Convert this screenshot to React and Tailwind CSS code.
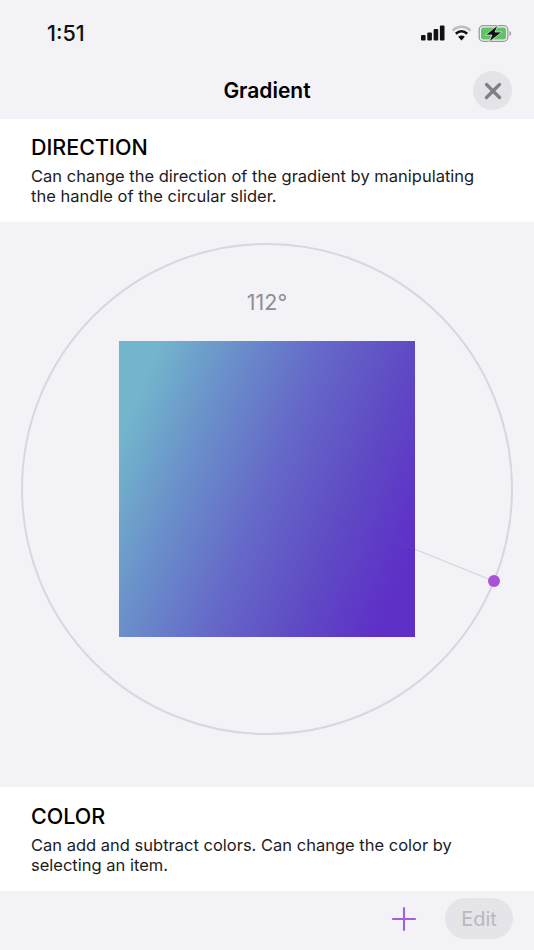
import { X, Plus } from 'lucide-react'

function StatusIcons() {
  return (
    <div className="flex items-center gap-[6px]">
      <svg width="24" height="16" viewBox="0 0 24 16">
        <rect x="0" y="10" width="4.6" height="5.5" rx="1" fill="#111" />
        <rect x="6.3" y="7.5" width="4.6" height="8" rx="1" fill="#111" />
        <rect x="12.6" y="4" width="4.6" height="11.5" rx="1" fill="#111" />
        <rect x="18.9" y="0.5" width="4.6" height="15" rx="1" fill="#111" />
      </svg>
      <svg width="21" height="16" viewBox="0 0 20 15" fill="none">
        <path d="M1.5 5.2C6.5 .3 13.5 .3 18.5 5.2" stroke="#bdbdc0" strokeWidth="2.4" />
        <path d="M4.6 8.2C7.8 5.2 12.2 5.2 15.4 8.2" stroke="#111" strokeWidth="2.4" />
        <path d="M10 14.6L6.8 11C8.6 9.5 11.4 9.5 13.2 11Z" fill="#111" />
      </svg>
      <svg width="34" height="17" viewBox="0 0 33 17" fill="none">
        <rect x="0.7" y="0.7" width="28.6" height="15.6" rx="4" stroke="#9a9a9d" strokeWidth="1.3" />
        <rect x="2.5" y="2.5" width="25" height="12" rx="2.2" fill="#5fc466" />
        <path d="M31 6V11C32.2 10.6 32.6 9.6 32.6 8.5S32.2 6.4 31 6Z" fill="#9a9a9d" />
        <path d="M19.5 0L7 10H13.5L10.5 17L23.5 7H16.5Z" fill="#111" stroke="#e4f4e4" strokeWidth="0.7" />
      </svg>
    </div>
  )
}

function InfoBlock({ title, className, children }) {
  return (
    <section className={`bg-white px-[31px] ${className}`}>
      <h2 className="text-[21.5px] leading-[27px] font-medium text-black">{title}</h2>
      <p className="mt-[5px] w-[460px] text-[16.5px] leading-[20px] text-[#1c1c1e]">{children}</p>
    </section>
  )
}

export default function App() {
  return (
    <div className="flex h-[950px] w-[534px] flex-col overflow-hidden bg-[#f2f2f7] font-['Inter','Liberation_Sans',sans-serif]">
      <div className="flex h-[59px] items-center justify-between pt-[7px] pr-[22px] pl-[47px]">
        <span className="text-[21.5px] font-medium text-[#111]">1:51</span>
        <StatusIcons />
      </div>

      <header className="relative flex h-[60px] items-center justify-center pt-[4px]">
        <h1 className="text-[21px] font-semibold text-black">Gradient</h1>
        <button
          type="button"
          className="absolute top-[12px] right-[22px] flex h-[39px] w-[39px] items-center justify-center rounded-full bg-[#e3e3e8]"
        >
          <X size={26} strokeWidth={3} className="text-[#7f7f84]" />
        </button>
      </header>

      <InfoBlock title="DIRECTION" className="h-[103px] pt-[15px]">
        Can change the direction of the gradient by manipulating the handle of the circular slider.
      </InfoBlock>

      <main className="flex h-[565px] justify-center pt-[21px]">
        <div className="relative flex h-[492px] w-[492px] items-center justify-center rounded-full border-2 border-[#d8d7dd]">
          <span className="absolute top-[41px] left-0 w-full text-center text-[21.5px] text-[#8e8e93]">112°</span>
          <div className="h-[296px] w-[296px] bg-[linear-gradient(112deg,#72b5cc_10%,#6a8fca_29%,#6568c8_50%,#5f4ac4_71%,#5e30c8_90%)]" />
          {/* radius from the centre to the handle, faint while it crosses the square */}
          <div className="absolute top-[244px] left-[244px] h-px w-[245px] origin-left rotate-[22deg] bg-[linear-gradient(90deg,transparent_15%,#5c3fb8_65%,#d3d2d8_65%)]" />
          <div className="absolute top-[330px] left-[465px] h-[12px] w-[12px] rounded-full bg-[#a952d8]" />
        </div>
      </main>

      <InfoBlock title="COLOR" className="h-[104px] pt-[16px]">
        Can add and subtract colors. Can change the color by selecting an item.
      </InfoBlock>

      <footer className="flex h-[59px] items-center justify-end gap-[22px] pr-[21px] pb-[4px]">
        <Plus size={38} strokeWidth={1.3} className="text-[#a65fd8]" />
        <button
          type="button"
          className="h-[41px] w-[68px] rounded-full bg-[#e4e4e9] text-[20px] text-[#b9b9be]"
        >
          Edit
        </button>
      </footer>
    </div>
  )
}
